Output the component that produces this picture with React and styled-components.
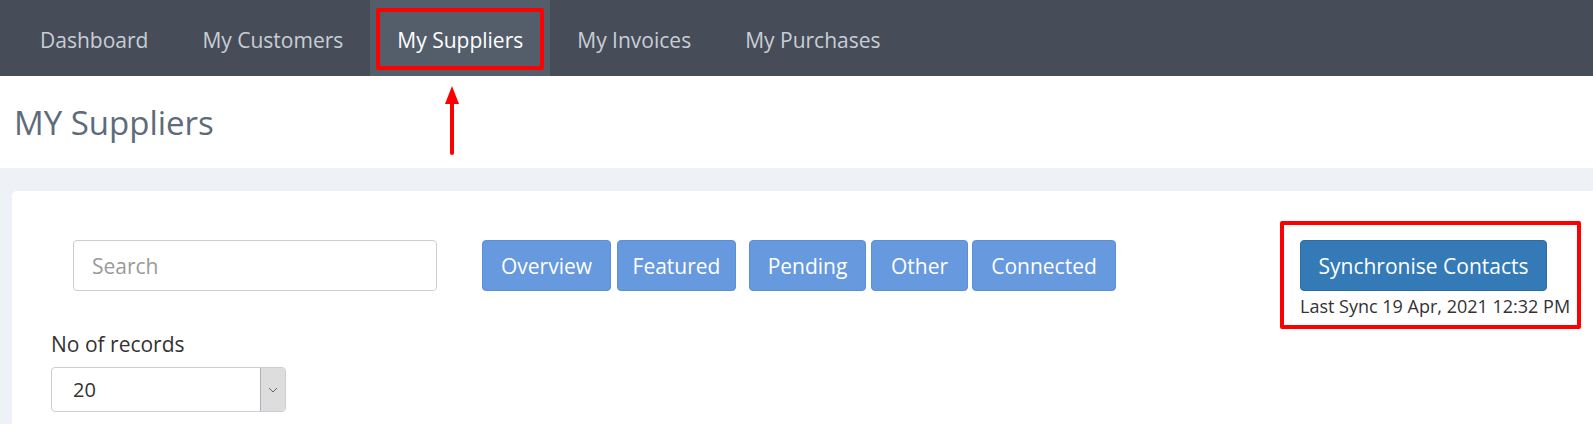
import React from "react";
import styled, { createGlobalStyle } from "styled-components";

const Global = createGlobalStyle`
  html, body { margin: 0; padding: 0; background: #ffffff; }
  body { font-family: "Open Sans", "Noto Sans", sans-serif; overflow: hidden; }
  * { box-sizing: border-box; }
`;

const Page = styled.div`
  position: relative;
  width: 1593px;
  height: 424px;
  overflow: hidden;
`;

const Nav = styled.nav`
  display: flex;
  height: 76px;
  background: #464c58;
  padding-left: 13px;
`;

const NavItem = styled.a`
  position: relative;
  display: flex;
  align-items: center;
  padding: 3px 27px 0;
  font-size: 21px;
  color: ${(p) => (p.$active ? "#ffffff" : "#c9ced6")};
  background: ${(p) => (p.$active ? "#545e6b" : "transparent")};
  text-decoration: none;
`;

const NavHighlight = styled.span`
  position: absolute;
  left: 6px;
  right: 6px;
  top: 8px;
  bottom: 6px;
  border: 4px solid #ff0000;
  border-radius: 2px;
`;

const Header = styled.header`
  display: flex;
  align-items: center;
  height: 92px;
  padding: 0 0 0 14px;
`;

const Title = styled.h1`
  margin: 0;
  font-size: 33px;
  font-weight: 400;
  color: #5d6b7a;
`;

const Arrow = styled.svg`
  position: absolute;
  left: 443px;
  top: 85px;
`;

const Main = styled.main`
  background: #eef1f6;
  padding: 23px 0 0 12px;
  height: 256px;
`;

const Card = styled.section`
  background: #ffffff;
  border-radius: 5px 0 0 0;
  height: 100%;
  padding: 49px 0 0 39px;
`;

const Toolbar = styled.div`
  display: flex;
  align-items: flex-start;
  padding-left: 22px;
`;

const SearchInput = styled.input`
  width: 364px;
  height: 51px;
  border: 1px solid #c9ced6;
  border-radius: 4px;
  padding: 0 18px;
  font-family: inherit;
  font-size: 21px;
  color: #333;
  outline: none;
  &::placeholder { color: #9a9a9a; }
`;

const FilterGroup = styled.div`
  display: flex;
  margin-left: 45px;
`;

const FilterButton = styled.button`
  width: ${(p) => p.$width}px;
  height: 51px;
  margin-left: ${(p) => p.$gap || 0}px;
  padding: 0;
  background: #6699dd;
  border: 1px solid #5b8fd8;
  border-radius: 4px;
  color: #ffffff;
  font-family: inherit;
  font-size: 21px;
  cursor: pointer;
`;

const SyncBox = styled.div`
  position: relative;
  display: flex;
  flex-direction: column;
  margin-left: 184px;
`;

const SyncHighlight = styled.span`
  position: absolute;
  left: -20px;
  right: -11px;
  top: -19px;
  bottom: -11px;
  border: 4px solid #ff0000;
  border-radius: 2px;
`;

const SyncButton = styled.button`
  width: 247px;
  height: 51px;
  background: #337ab7;
  border: 1px solid #2e6da4;
  border-radius: 4px;
  color: #ffffff;
  font-family: inherit;
  font-size: 21px;
  cursor: pointer;
`;

const SyncNote = styled.span`
  margin-top: 3px;
  font-size: 18px;
  line-height: 24px;
  color: #333333;
  white-space: nowrap;
`;

const RecordsBlock = styled.div`
  display: flex;
  flex-direction: column;
  margin-top: 12px;
`;

const Label = styled.label`
  font-size: 21px;
  color: #333333;
  line-height: 28px;
`;

const SelectBox = styled.div`
  display: flex;
  width: 235px;
  height: 45px;
  margin-top: 9px;
  border: 1px solid #c9ced6;
  border-radius: 4px;
  overflow: hidden;
`;

const SelectValue = styled.span`
  flex: 1;
  display: flex;
  align-items: center;
  padding-left: 21px;
  font-size: 20px;
  color: #333;
`;

const SelectToggle = styled.span`
  width: 25px;
  display: flex;
  align-items: center;
  justify-content: center;
  background: #dddddd;
  border-left: 1px solid #aab1bb;
`;

const filters = [
  { label: "Overview", gap: 0, width: 129 },
  { label: "Featured", gap: 6, width: 119 },
  { label: "Pending", gap: 13, width: 117 },
  { label: "Other", gap: 5, width: 97 },
  { label: "Connected", gap: 4, width: 144 },
];

export default function App() {
  return (
    <>
      <Global />
      <Page>
        <Nav>
          <NavItem>Dashboard</NavItem>
          <NavItem>My Customers</NavItem>
          <NavItem $active>
            My Suppliers
            <NavHighlight />
          </NavItem>
          <NavItem>My Invoices</NavItem>
          <NavItem>My Purchases</NavItem>
        </Nav>
        <Header>
          <Title>MY Suppliers</Title>
        </Header>
        <Arrow width="18" height="72" viewBox="0 0 18 72">
          <polygon points="9,1 16,19 2,19" fill="#ff0000" />
          <rect x="7" y="17" width="4" height="53" rx="2" fill="#ff0000" />
        </Arrow>
        <Main>
          <Card>
            <Toolbar>
              <SearchInput placeholder="Search" />
              <FilterGroup>
                {filters.map((f) => (
                  <FilterButton key={f.label} $gap={f.gap} $width={f.width}>
                    {f.label}
                  </FilterButton>
                ))}
              </FilterGroup>
              <SyncBox>
                <SyncHighlight />
                <SyncButton>Synchronise Contacts</SyncButton>
                <SyncNote>Last Sync 19 Apr, 2021 12:32 PM</SyncNote>
              </SyncBox>
            </Toolbar>
            <RecordsBlock>
              <Label>No of records</Label>
              <SelectBox>
                <SelectValue>20</SelectValue>
                <SelectToggle>
                  <svg width="10" height="6" viewBox="0 0 10 6">
                    <polyline points="1,1 5,5 9,1" fill="none" stroke="#666" strokeWidth="1" />
                  </svg>
                </SelectToggle>
              </SelectBox>
            </RecordsBlock>
          </Card>
        </Main>
      </Page>
    </>
  );
}
